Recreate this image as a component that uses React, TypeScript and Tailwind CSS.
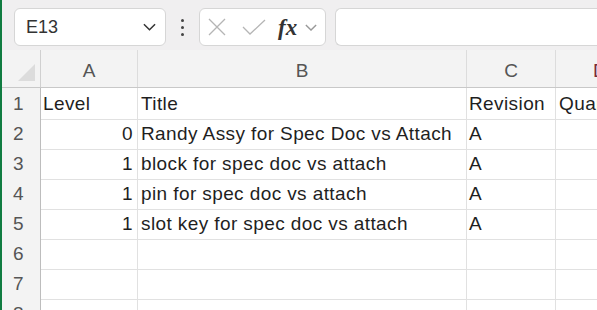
import React from "react";

const rows: Array<[string, string, string, string]> = [
  ["1", "Level", "Title", "Revision"],
  ["2", "0", "Randy Assy for Spec Doc vs Attach", "A"],
  ["3", "1", "block for spec doc vs attach", "A"],
  ["4", "1", "pin for spec doc vs attach", "A"],
  ["5", "1", "slot key for spec doc vs attach", "A"],
  ["6", "", "", ""],
  ["7", "", "", ""],
  ["8", "", "", ""],
];

const font = { fontFamily: '"Liberation Sans", Arial, sans-serif' };

function Chevron({ className }: { className?: string }) {
  return (
    <svg viewBox="0 0 14 8" className={className} fill="none" stroke="currentColor" strokeWidth="1.6">
      <path d="M1 1l6 6 6-6" />
    </svg>
  );
}

function Toolbar() {
  return (
    <div className="shrink-0 flex items-center h-[50px] pt-[4px] bg-[#f0eff0]">
      <div className="ml-[12px] w-[152px] h-[38px] flex items-center justify-between bg-white border border-[#d6d6d6] rounded-[6px] pl-[11px] pr-[9px]">
        <span className="text-[18px] text-[#333]">E13</span>
        <Chevron className="w-[13px] h-[8px] text-[#333]" />
      </div>
      <div className="w-[33px] flex flex-col items-center gap-[4px]">
        <span className="w-[3px] h-[3px] rounded-full bg-[#444]" />
        <span className="w-[3px] h-[3px] rounded-full bg-[#444]" />
        <span className="w-[3px] h-[3px] rounded-full bg-[#444]" />
      </div>
      <div className="w-[127px] h-[38px] flex items-center bg-white border border-[#d6d6d6] rounded-[6px] pl-[7px]">
        <svg viewBox="0 0 20 20" className="w-[20px] h-[20px] text-[#b5b5b5]" fill="none" stroke="currentColor" strokeWidth="1.3">
          <path d="M2 2l16 16M18 2L2 18" />
        </svg>
        <svg viewBox="0 0 24 16" className="ml-[15px] w-[24px] h-[16px] text-[#b5b5b5]" fill="none" stroke="currentColor" strokeWidth="1.3">
          <path d="M1 8l7 7L23 1" />
        </svg>
        <span className="ml-[12px] text-[#333] text-[23px] italic font-bold leading-none" style={{ fontFamily: '"Liberation Serif", serif' }}>
          fx
        </span>
        <Chevron className="ml-[8px] w-[12px] h-[7px] text-[#999]" />
      </div>
      <div className="ml-[9px] flex-1 h-[38px] bg-white border border-[#d6d6d6] border-r-0 rounded-l-[6px]" />
    </div>
  );
}

export default function App() {
  return (
    <div className="w-[597px] h-[310px] overflow-hidden flex bg-white" style={font}>
      <div className="w-[2px] bg-[#107c41] shrink-0" />
      <div className="flex-1 flex flex-col">
        <Toolbar />
        <div className="shrink-0 grid grid-cols-[39px_97px_329px_89px_1fr] h-[38px] bg-[#f3f3f3] border-b border-[#c8c8c8] text-[19px] text-[#555]">
          <div className="relative border-r border-[#d0d0d0]">
            <svg viewBox="0 0 18 18" className="absolute left-[16px] bottom-[6px] w-[17px] h-[17px]">
              <path d="M18 0V18H0Z" fill="#dcdcdc" />
            </svg>
          </div>
          <div className="flex items-center justify-center pt-[6px] border-r border-[#dcdcdc]">A</div>
          <div className="flex items-center justify-center pt-[6px] border-r border-[#dcdcdc]">B</div>
          <div className="flex items-center justify-center pt-[6px] border-r border-[#dcdcdc]">C</div>
          <div className="flex items-center pt-[6px] pl-[37px] text-[#7a2a3a]">D</div>
        </div>
        {rows.map(([n, a, b, c]) => (
          <div
            key={n}
            className="shrink-0 grid grid-cols-[39px_97px_329px_89px_1fr] h-[30px] text-[19px] tracking-[0.4px] text-[#1f1f1f]"
          >
            <div className="flex items-center pt-[2px] pl-[11px] bg-[#f3f3f3] text-[#555] border-r border-[#bdbdbd] border-b border-b-[#dedede]">
              {n}
            </div>
            <div className="flex items-center justify-end pt-[2px] pr-[4px] border-r border-b border-[#e1e1e1]">
              {n === "1" ? <span className="mr-auto pl-[2px]">{a}</span> : a}
            </div>
            <div className="flex items-center pt-[2px] pl-[3px] whitespace-nowrap border-r border-b border-[#e1e1e1]">{b}</div>
            <div className="flex items-center pt-[2px] pl-[2px] border-r border-b border-[#e1e1e1]">{c}</div>
            <div className="flex items-center pt-[2px] pl-[3px] whitespace-nowrap overflow-hidden border-b border-[#e1e1e1]">
              {n === "1" ? "Quantity" : ""}
            </div>
          </div>
        ))}
      </div>
    </div>
  );
}
